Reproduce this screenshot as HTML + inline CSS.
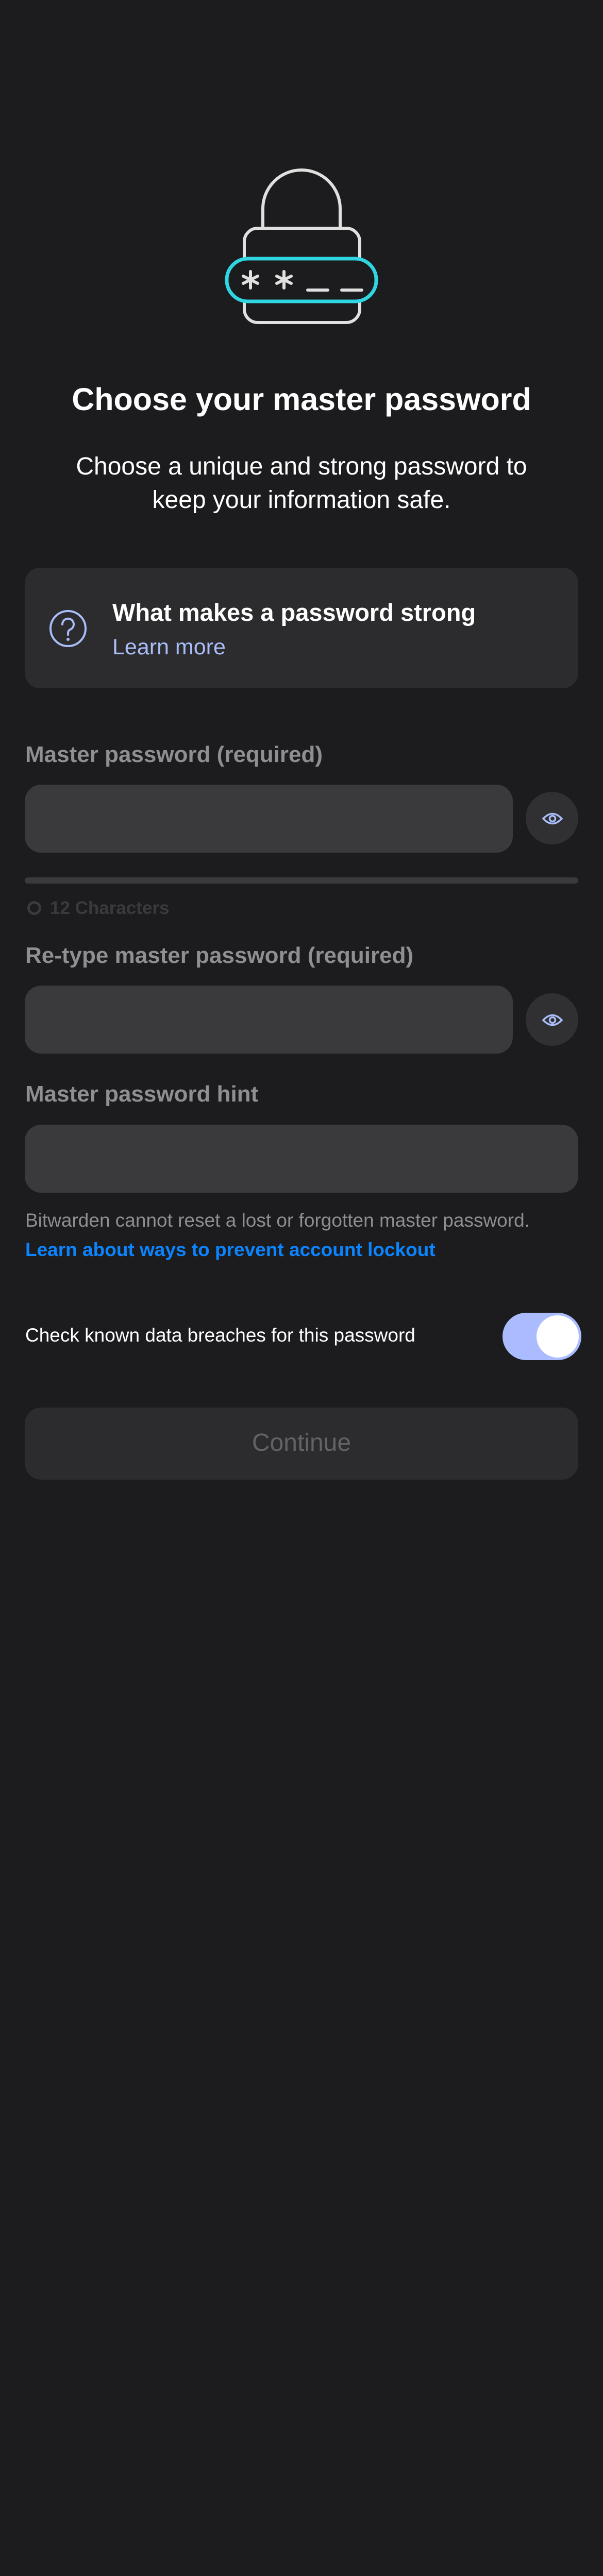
<!DOCTYPE html>
<html><head><meta charset="utf-8"><style>
*{margin:0;padding:0;box-sizing:border-box}
html{width:1170px;height:5064px;overflow:hidden;background:#1c1c1e}
body{width:1170px;height:5064px;background:#1c1c1e;font-family:"Liberation Sans",sans-serif;position:relative;overflow:hidden;color:#fff}
.a{position:absolute}
.t{white-space:nowrap}
.lbl{color:#8e8e93;font-weight:bold;font-size:44px;left:49px}
.inp{background:#3a3a3c;border-radius:32px;left:48px;height:132px}
.eye{width:102px;height:102px;border-radius:51px;background:#303033;left:1020px}
</style></head><body>
<svg class="a" style="left:0;top:0" width="1170" height="700">
<path d="M510 443 V405 A75 75 0 0 1 660 405 V443" fill="none" stroke="#e0e0e0" stroke-width="6"/>
<rect x="474" y="443" width="224" height="183" rx="26" fill="none" stroke="#e0e0e0" stroke-width="6"/>
<rect x="440" y="502" width="290" height="83" rx="41" fill="#1c1c1e" stroke="#2fd5e0" stroke-width="7"/>
<g stroke="#e0e0e0" stroke-width="6" stroke-linecap="round">
<path d="M486 527 V559 M472 536 L500 550 M500 536 L472 550"/>
<path d="M551 527 V559 M537 536 L565 550 M565 536 L537 550"/>
<path d="M597 563 H636 M663 563 H702"/>
</g>
</svg>
<div class="a t" style="left:0;width:1170px;text-align:center;top:740px;font-size:61px;font-weight:bold">Choose your master password</div>
<div class="a" style="left:0;width:1170px;text-align:center;top:873px;font-size:48px;line-height:65px">Choose a unique and strong password to<br>keep your information safe.</div>
<div class="a" style="left:48px;top:1102px;width:1074px;height:234px;background:#2c2c2e;border-radius:30px"></div>
<svg class="a" style="left:95px;top:1183px" width="74" height="74"><circle cx="37" cy="37" r="34" fill="none" stroke="#a9bdf8" stroke-width="4"/><path d="M26 29 A11 11 0 1 1 41 39 Q37 41 37 46 V49" fill="none" stroke="#a9bdf8" stroke-width="4" stroke-linecap="round"/><circle cx="37" cy="58" r="3" fill="#a9bdf8"/></svg>
<div class="a t" style="left:218px;top:1161px;font-size:47px;font-weight:bold">What makes a password strong</div>
<div class="a t" style="left:218px;top:1232px;font-size:43px;color:#a9bdf8">Learn more</div>
<div class="a t lbl" style="top:1440px">Master password (required)</div>
<div class="a inp" style="top:1523px;width:947px"></div>
<div class="a eye" style="top:1537px"></div>
<div class="a" style="left:48px;top:1703px;width:1074px;height:12px;border-radius:6px;background:#3a3a3c"></div>
<div class="a" style="left:53px;top:1749px;width:27px;height:27px;border-radius:50%;border:5px solid #3a3a3c"></div>
<div class="a t" style="left:97px;top:1743px;font-size:35px;font-weight:bold;color:#3a3a3c">12 Characters</div>
<div class="a t lbl" style="top:1830px">Re-type master password (required)</div>
<div class="a inp" style="top:1913px;width:947px"></div>
<div class="a eye" style="top:1928px"></div>
<div class="a t lbl" style="top:2099px">Master password hint</div>
<div class="a inp" style="top:2183px;width:1074px"></div>
<div class="a t" style="left:49px;top:2348px;font-size:37px;color:#8e8e93">Bitwarden cannot reset a lost or forgotten master password.</div>
<div class="a t" style="left:49px;top:2405px;font-size:37px;font-weight:bold;color:#0a84ff">Learn about ways to prevent account lockout</div>
<div class="a t" style="left:49px;top:2571px;font-size:37px;color:#fff">Check known data breaches for this password</div>
<div class="a" style="left:975px;top:2548px;width:153px;height:92px;border-radius:46px;background:#aabcff"></div>
<div class="a" style="left:1041px;top:2553px;width:82px;height:82px;border-radius:41px;background:#fff"></div>
<div class="a" style="left:48px;top:2732px;width:1074px;height:140px;border-radius:32px;background:#2c2c2e"></div>
<div class="a t" style="left:0;width:1170px;text-align:center;top:2773px;font-size:48px;color:#636366">Continue</div>
<svg class="a" style="left:1052px;top:1576px" width="40" height="26"><path d="M2 13 Q20 -6 38 13 Q20 32 2 13Z" fill="none" stroke="#a9bdf8" stroke-width="3.5"/><circle cx="20" cy="13" r="5.5" fill="none" stroke="#a9bdf8" stroke-width="3.5"/></svg>
<svg class="a" style="left:1052px;top:1967px" width="40" height="26"><path d="M2 13 Q20 -6 38 13 Q20 32 2 13Z" fill="none" stroke="#a9bdf8" stroke-width="3.5"/><circle cx="20" cy="13" r="5.5" fill="none" stroke="#a9bdf8" stroke-width="3.5"/></svg>
</body></html>
